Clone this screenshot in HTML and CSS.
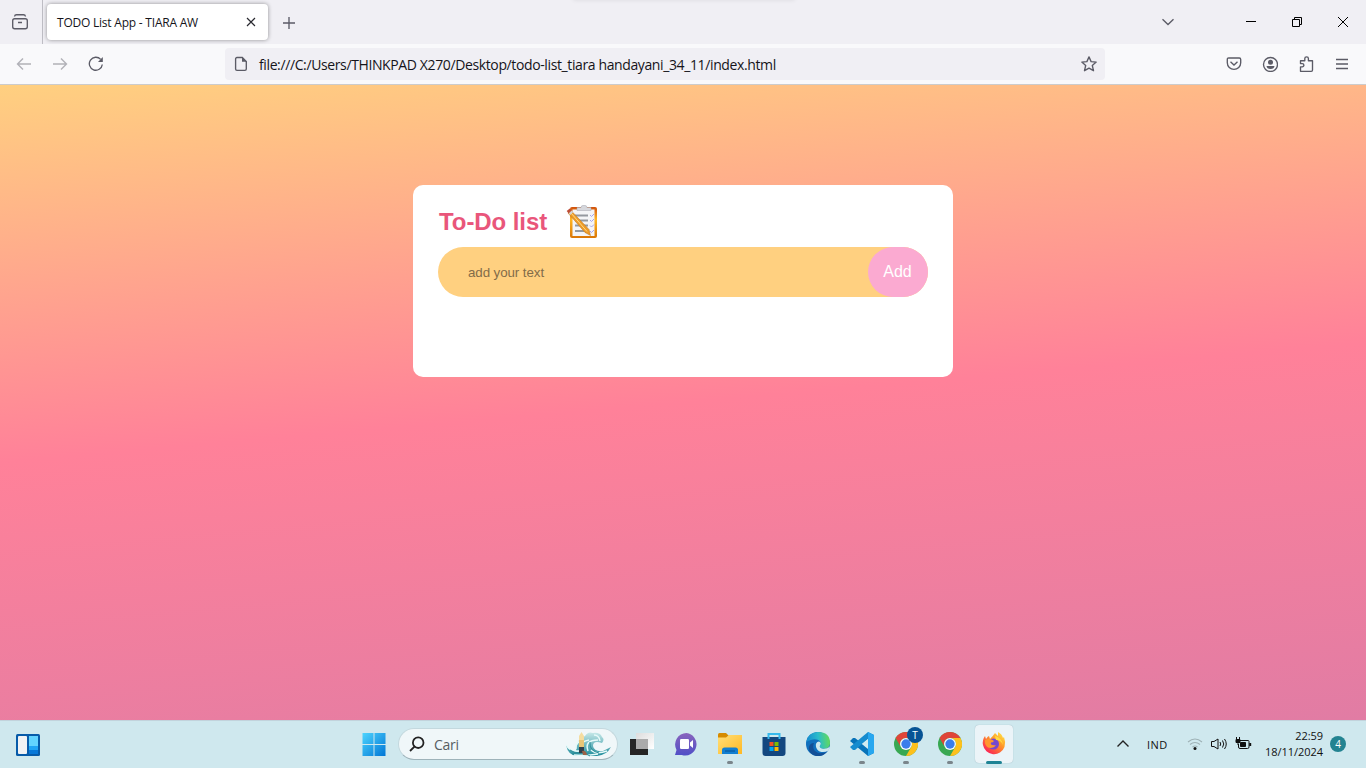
FILE: index.html
```html
<!DOCTYPE html>
<html lang="id">
<head>
<meta charset="utf-8">
<title>TODO List App - TIARA AW</title>
<link rel="stylesheet" href="styles.css">
</head>
<body>
<div class="screen">
  <header class="tabs">
    <div class="firefox-view">
      <svg class="line" width="16" height="16" viewBox="0 0 16 16"><rect x=".7" y="4.700" width="14.600" height="10" rx="2"/><path d="M2.500 2.500Q2.800.7 4.500.7h7Q13.200.7 13.500 2.500M6 8.500h4"/></svg>
    </div>
    <div class="tab"><span class="tab-title">TODO List App - TIARA AW</span>
      <svg class="dark" width="10" height="10" viewBox="0 0 10 10"><path d="M1 1l8 8M9 1L1 9"/></svg>
    </div>
    <svg class="line new-tab" width="14" height="14" viewBox="0 0 14 14"><path d="M7 1v12M1 7h12"/></svg>
    <div class="window-actions">
      <svg class="line" width="14" height="14" viewBox="0 0 14 14"><path d="M1.500 4.200L7 9.500l5.500-5.300"/></svg>
      <svg class="black" width="10" height="10" viewBox="0 0 10 10"><path d="M0 4.500h10"/></svg>
      <svg class="black" width="10" height="10" viewBox="0 0 10 10"><path d="M.5 2.500h7v7h-7zM2.500 2.500v-2h7v7h-2"/></svg>
      <svg class="black" width="10" height="10" viewBox="0 0 10 10"><path d="M0 0l10 10M10 0L0 10"/></svg>
    </div>
    <div class="top-handle"></div>
  </header>
  <nav class="toolbar">
    <div class="nav-buttons">
      <svg class="line muted" width="16" height="16" viewBox="0 0 16 16"><path d="M15 8H1.500M7 2.500L1.500 8 7 13.500"/></svg>
      <svg class="line muted" width="16" height="16" viewBox="0 0 16 16"><path d="M1 8h13.500M9 2.500L14.500 8 9 13.500"/></svg>
      <svg class="line" width="16" height="16" viewBox="0 0 16 16"><path d="M14.300 8.500A6.500 6.500 0 1 1 12.700 3.400"/><path class="solid" d="M14.800 1v5H10z"/></svg>
    </div>
    <div class="address">
      <svg class="line" width="16" height="16" viewBox="0 0 16 16"><path d="M4 1.500h5.300L13.300 5.500V13a1.400 1.400 0 0 1-1.400 1.400H4A1.400 1.400 0 0 1 2.600 13V3A1.400 1.400 0 0 1 4 1.500z"/><path class="solid" d="M9 1v4.700h4.500z"/></svg>
      <span class="url">file:///C:/Users/THINKPAD X270/Desktop/todo-list_tiara handayani_34_11/index.html</span>
      <svg class="line" width="16" height="16" viewBox="0 0 16 16"><path stroke-linejoin="round" d="M8 .9l2.100 4.700 5.100.5-3.900 3.400 1.200 5.200L8 12.100l-4.500 2.600 1.200-5.200L.8 6.100l5.100-.5z"/></svg>
    </div>
    <div class="tools">
      <svg class="line" width="16" height="16" viewBox="0 0 16 16"><path d="M2.700 2h10.600q1.400 0 1.400 1.400v3.300a6.700 6.700 0 0 1-13.400 0V3.400Q1.300 2 2.700 2zM4.500 5.800L8 9l3.500-3.200"/></svg>
      <svg class="line" width="16" height="16" viewBox="0 0 16 16"><circle cx="8.500" cy="8.500" r="7"/><circle class="solid" cx="8.500" cy="6.200" r="2.500"/><path class="solid" d="M4.500 10h8q-.3 3-4 3t-4-3z"/></svg>
      <svg class="line" width="16" height="16" viewBox="0 0 16 16"><path stroke-linejoin="round" d="M2.500 15.300v-4.500h1.800a1.500 1.500 0 0 0 0-3.200H2.500V4.700h4.300V2.600a1.800 1.800 0 0 1 3.600 0v2.100h4.100v9.300q0 1.300-1.200 1.300z"/></svg>
      <svg class="line" width="16" height="16" viewBox="0 0 16 16"><path d="M2 3.500h12M2 8h12M2 12.500h12"/></svg>
    </div>
  </nav>

  <main class="page">
    <section class="todo">
      <h1 class="heading">To-Do list
        <svg class="clipboard" width="32" height="34" viewBox="0 0 32 34">
          <defs><linearGradient id="board" x2="0" y2="1"><stop stop-color="#d0500c"/><stop offset=".4" stop-color="#ffb624"/><stop offset="1" stop-color="#d97505"/></linearGradient></defs>
          <rect x="4" y="2" width="27" height="31" rx="2" fill="url(#board)"/>
          <path d="M6.500 4.500h22V31h-22z" fill="#f4f5f7"/>
          <path d="M11 2.500h4q0-2.200 3-2.200t3 2.200h4v3H11z" fill="#d6d7dc" stroke="#a5a7af" stroke-width=".5"/>
          <path d="M9 10.500h13M9 15.500h13M9 20.500h13M9 26h13" stroke="#94999f" stroke-width="2"/>
          <path d="M24 10l1.500 1.500L28 9M24 15l1.500 1.500L28 14M24 20.500l1.500 1.500 2.500-2.500M24 26l1.500 1.500L28 25" fill="none" stroke="#a4a3ed"/>
          <path d="M2 8l3-2.500 18 19 1.500 6-5.500-3z" fill="#ed9b27" stroke="#b87423" stroke-width=".5"/><path d="M5 8l16 18.500" stroke="#ffda83"/><path d="M.7 6l3-2.500 2 2-3 3z" fill="#bd4d37"/><path d="M2.700 8.500l3-3 1.500 1.500-3 3z" fill="#d3d3d3"/>
        </svg>
      </h1>
      <div class="entry"><input class="entry-text" placeholder="add your text"><button class="add">Add</button></div>
    </section>
  </main>

  <footer class="taskbar">
    <svg class="widgets" width="24" height="22" viewBox="0 0 24 22"><rect width="24" height="22" rx="1.500" fill="#075ba9"/><rect x="2" y="2" width="9" height="18" rx="1" fill="#f1f2f4"/><path d="M13 2h9v10h-9z" fill="#62d3ff"/><path d="M13 12h9v4h-9z" fill="#20a4f5"/><path d="M13 16h9v4h-9z" fill="#0878d8"/></svg>
    <div class="apps">
      <div class="app start"><svg width="24" height="24" viewBox="0 0 24 24"><defs><linearGradient id="win" gradientUnits="userSpaceOnUse" x2="24" y2="24"><stop stop-color="#50d7ff"/><stop offset="1" stop-color="#0075d5"/></linearGradient></defs><path fill="url(#win)" d="M.5 1h11v11H.5zM12.500 1h11v11h-11zM.5 13h11v11H.5zM12.500 13h11v11h-11z"/></svg></div>
      <div class="search">
        <svg width="16" height="16" viewBox="0 0 16 16" fill="none" stroke="#222" stroke-width="1.800"><circle cx="9.200" cy="6.700" r="5.300"/><path d="M5.700 10.300L1 15"/></svg>
        <span class="search-text">Cari</span>
        <svg width="48" height="27" viewBox="0 0 48 27"><defs><linearGradient id="sea" x2="0" y2="1"><stop stop-color="#c7e9e9"/><stop offset="1" stop-color="#208c9b"/></linearGradient></defs>
          <path d="M1 14q3 6 10 6Q12 7 20 5q3-5 8-3 7-1 9 4 3 2 0 6-9-3-9 3 1 6 10 5l8-4q-4 8-14 9H13Q3 25 1 14z" fill="url(#sea)"/>
          <path d="M1.500 14q3 7 13 6M11 18q-1-5 4-8M29 4q5 0 6 6M17 19q-4-8 7-10M23 20q-4-11 10-11M26 19q5 5 16 1M9 24q13 1 24-1" fill="none" stroke="#e6faf9" stroke-width="1.500"/>
          <path d="M7 23q10-4 18 2M25 11q-1 9 9 11M5 19q5 4 11 3" stroke="#2e8e99" fill="none"/>
          <path d="M14 5l2.500-4L19 5v7h-5z" fill="#f4dda1"/><path d="M14 9h5v7h-5z" fill="#e9c576"/><path d="M14 16h5v6h-5z" fill="#31404c"/><path d="M17 20q4-1 5 4h-4z" fill="#9c6247"/></svg>
      </div>
      <div class="app"><svg width="24" height="24" viewBox="0 0 24 24"><defs><linearGradient id="pane" x2="1" y2="1"><stop stop-color="#ddd"/><stop offset="1" stop-color="#fff"/></linearGradient></defs><path d="M0 7h18v16H0z" fill="#252525"/><path d="M6 1h18v16H6z" fill="url(#pane)"/><path d="M6 7h12v10H6z" fill="#aaa"/></svg></div>
      <div class="app"><svg width="24" height="24" viewBox="0 0 24 24"><defs><linearGradient id="chat" x2="0" y2="1"><stop stop-color="#8964bd"/><stop offset="1" stop-color="#504fc7"/></linearGradient></defs><path d="M12.500 1a11.300 11.300 0 1 1-4.700 22H1l1.500-5A11.500 11.500 0 0 1 12.500 1z" fill="url(#chat)"/><rect x="6" y="7" width="9" height="10" rx="1.200" fill="#fff"/><path d="M16 10.500l3-2.500v8l-3-2.500z" fill="#fff"/></svg></div>
      <div class="app open"><svg width="24" height="24" viewBox="0 0 24 24"><defs><linearGradient id="folder" x2="1" y2="1"><stop stop-color="#ffdf79"/><stop offset="1" stop-color="#ffb823"/></linearGradient></defs><path d="M0 2.500Q0 1 1.500 1H8l3 3-3 4H0z" fill="#d68b00"/><path d="M0 5.500h8L11 3h13v19H0z" fill="url(#folder)"/><path d="M4 22v-4q0-2.500 2.500-2.500h11q2.500 0 2.500 2.500v4z" fill="#117fd1"/><path d="M7 19h10" stroke="#075394"/></svg></div>
      <div class="app"><svg width="24" height="24" viewBox="0 0 24 24"><path d="M.5 5h23v16q0 3-3 3h-17q-3 0-3-3z" fill="#13477f"/><path d="M6.500 7V2h11v5" fill="none" stroke="#35b9ed" stroke-width="2"/><path d="M7.500 10h4v4h-4z" fill="#f25022"/><path d="M12.500 10h4v4h-4z" fill="#7fba00"/><path d="M7.500 15h4v4h-4z" fill="#00a4ef"/><path d="M12.500 15h4v4h-4z" fill="#ffb900"/></svg></div>
      <div class="app"><svg width="24" height="24" viewBox="0 0 24 24"><defs><linearGradient id="edge" y1=".3" x2="1" y2=".2"><stop stop-color="#158acf"/><stop offset=".5" stop-color="#2abccb"/><stop offset="1" stop-color="#67dc52"/></linearGradient></defs><circle cx="12" cy="12" r="12" fill="#106fbd"/><path d="M.2 10Q2 0 12 0q12 0 12 11c0 5-5 7-9 5q-2-1-.5-3.500C16 9 10 4 .2 10z" fill="url(#edge)"/><path d="M10 15q-1-5 3-5.500 3 1.500 1 4-1 2 2 3 4 1.200 8-2l-1.500 4q-3 2-7 1.500-4-.5-5.500-5z" fill="#cce7ed"/><path d="M8 11c-3 7 3 11 8 10q3 0 5-1.500-4 5.500-11 4.500-8-2-7-9 1-4 5-4z" fill="#134f96"/></svg></div>
      <div class="app open"><svg width="24" height="24" viewBox="0 0 24 24"><path d="M18 0l6 3v18l-6 3L0 9l3-3h2l13 10.300z" fill="#0873b9"/><path d="M18 0v7L5 18H3l-3-3z" fill="#168ccf"/><path d="M18 0l6 3v18l-6 3z" fill="#28a7ef"/><path d="M18 7v10l-6.200-5z" fill="#d0eaf0"/></svg></div>
      <div class="app open"><svg width="24" height="24" viewBox="0 0 24 24"><g id="browser"><circle cx="12" cy="12" r="12" fill="#38a852"/><path d="M1.600 6A12 12 0 0 1 22.400 6H12a6 6 0 0 0-5.200 9z" fill="#df4539"/><path d="M22.400 6A12 12 0 0 1 12 24l5.200-9A6 6 0 0 0 12 6z" fill="#fdc01c"/><circle cx="12" cy="12" r="6" fill="#f7f9fd"/><circle cx="12" cy="12" r="4.700" fill="#397deb"/></g></svg><span class="profile">T</span></div>
      <div class="app open"><svg width="24" height="24" viewBox="0 0 24 24"><use href="#browser"/></svg></div>
      <div class="app open active"><svg width="24" height="24" viewBox="0 0 24 24"><defs><linearGradient id="fox" x1="1" x2=".2" y2="1"><stop stop-color="#fff44a"/><stop offset=".45" stop-color="#ff9829"/><stop offset="1" stop-color="#fb175a"/></linearGradient></defs><path d="M13 1l3 3V0q4 2 5 6l1-1q2 5 .5 10A11.200 11.200 0 0 1 1 13Q0 8 3 4l1 3q2-3 3-3l1 3q3-3 5-6z" fill="url(#fox)"/><circle cx="11.500" cy="12" r="5.500" fill="#7548cf"/><path d="M3 8q4-2 7.500 0l1.500 1q-1 1.500-3 1.500-1 1.500 1 2.500 2.500 0 4 .5-2 2-5 2.500-5 0-6-5z" fill="#ff972d"/><path d="M13 4q7 2 8 9-2-5-7-5z" fill="#ffdb43"/></svg></div>
    </div>
    <div class="tray">
      <svg class="chevron" width="14" height="14" viewBox="0 0 14 14"><path d="M1.500 9.500L7 4l5.500 5.500" fill="none" stroke="#222" stroke-width="1.400"/></svg>
      <span class="language">IND</span>
      <div class="status">
        <svg width="16" height="14" viewBox="0 0 16 14" fill="none" stroke="#9fb2b6" stroke-width="1.100"><path d="M1 5q7-6 14 0M3 7.500q5-4 10 0M5.500 10q2.500-2 5 0"/><circle cx="8" cy="11.500" r="1.500" fill="#111" stroke="none"/></svg>
        <svg width="18" height="14" viewBox="0 0 18 14" fill="none" stroke="#111"><path d="M1.500 4.500H4L8 2v10L4 9.500H1.500zM10 5q1.500 2 0 4M12.500 3.500q2.500 3.500 0 7M14.500 2q3.500 5 0 10"/></svg>
        <svg width="17" height="14" viewBox="0 0 17 14" fill="none" stroke="#111"><path d="M5 3.500h8q1 0 1 1v5.500q0 1.500-1.500 1.500H5q-1.500 0-1.500-1.500V7"/><path d="M5.500 5.500h5v4h-5z" fill="#111"/><path d="M1 2.500h4v3H1zM1.500 0v3M4.500 0v3M3 5v3" fill="#111"/><path d="M15.200 6v3" stroke-width="2"/></svg>
      </div>
      <div class="clock"><span class="time">22:59</span><span class="date">18/11/2024</span></div>
      <span class="notices">4</span>
    </div>
  </footer>
</div>
</body>
</html>
```

FILE: styles.css
```css
* { box-sizing: border-box; }
body { margin: 0; font-family: "Open Sans", "Noto Sans", sans-serif; overflow: hidden; }
svg { display: block; flex: none; }
.screen { width: 1366px; height: 768px; display: flex; flex-direction: column; }
.line, .dark, .black { fill: none; stroke: #5b5b66; stroke-width: 1.35; }
.dark { stroke: #28282f; stroke-width: 1.15; }
.black { stroke: #000; stroke-width: 1; }
.solid { fill: #5b5b66; stroke: none; }
.muted { opacity: .45; }

.tabs { height: 44px; background: #f0eff4; display: flex; align-items: center; position: relative; }
.firefox-view { width: 43px; height: 44px; padding: 14px 0 0 12px; border-right: 1px solid #bebdc4; }
.tab { width: 221px; height: 36px; margin-left: 4px; padding: 0 12px 0 10px; border-radius: 4px; background: #fff; box-shadow: 0 0 4px rgba(0,0,0,.4); display: flex; align-items: center; justify-content: space-between; }
.tab-title { font-size: 12px; letter-spacing: -.22px; color: #15141a; white-space: nowrap; }
.new-tab { margin-left: 14px; margin-top: 1px; }
.window-actions { margin-left: auto; padding-right: 18px; display: grid; grid-template-columns: 83px 46px 46px 10px; align-items: center; justify-items: start; }
.window-actions svg:first-child { margin-left: -2px; }
.top-handle { position: absolute; left: 573px; top: -3px; width: 222px; height: 3px; box-shadow: 0 0 4px rgba(0,0,0,.1); }

.toolbar { height: 41px; background: #f9f9fb; border-bottom: 1px solid #ccc; display: flex; align-items: center; }
.nav-buttons { width: 225px; padding-left: 16px; display: flex; gap: 20px; }
.address { width: 880px; height: 32px; padding: 0 8px; border-radius: 4px; background: #f0eff4; display: flex; align-items: center; }
.url { flex: 1; padding-left: 10px; color: #15141a; font-size: 14px; letter-spacing: -.38px; white-space: nowrap; }
.tools { margin-left: auto; padding-right: 16px; display: flex; gap: 20px; }

.page { height: 635px; padding-top: 100px; background: linear-gradient(175deg, #ffd080, #ff8199 50%, #e17ca4); }
.todo { width: 540px; height: 192px; margin: 0 auto; padding: 20px 25px; border-radius: 10px; background: #fff; }
.heading { height: 34px; margin: 0 0 8px; padding-left: 1px; display: flex; align-items: center; color: #e9567b; font: bold 24px "Liberation Sans", sans-serif; letter-spacing: -.08px; }
.clipboard { margin: -1px 0 0 19px; }
.entry { display: flex; height: 50px; border-radius: 30px; background: #ffd080; }
.entry-text { flex: 1; min-width: 0; padding: 0 0 0 30px; border: 0; outline: 0; background: transparent; font: 13.333px "Liberation Sans", sans-serif; letter-spacing: -.08px; }
.entry-text::placeholder { color: #826c49; }
.add { width: 60px; padding: 0 1px 0 0; border: 0; border-radius: 30px; background: #fbaad1; color: #fff; font: 16px "Liberation Sans", sans-serif; }

.taskbar { height: 48px; background: #cfe8ee; border-top: 1px solid #c2d3dc; display: flex; align-items: center; color: #202427; }
.widgets { margin-left: 16px; }
.apps { margin: -1px 0 0 311px; display: flex; align-items: center; height: 46px; }
.app { width: 44px; height: 46px; display: flex; align-items: center; justify-content: center; position: relative; }
.start { padding-left: 1px; }
.search { width: 220px; height: 32px; margin: 0 1px 0 3px; padding: 0 4px 0 10px; border-radius: 16px; background: #f0f7f9; border: 1px solid #c3d8de; border-bottom-color: #9eb3ba; display: flex; align-items: center; }
.search ~ .app { left: 1px; }
.search-text { flex: 1; padding-left: 9px; font-size: 14px; letter-spacing: -.25px; color: #575e62; }
.open::after { content: ""; position: absolute; bottom: 3px; width: 6px; height: 3px; border-radius: 2px; background: #7a858b; }
.active::before { content: ""; position: absolute; z-index: -1; inset: 4px 3px; border-radius: 4px; background: #ebf4f8; box-shadow: 0 0 1px #8faab4; }
.active { z-index: 0; }
.active::after { width: 16px; background: #1d8394; }
.profile { position: absolute; left: 23px; top: 6px; width: 16px; height: 16px; border-radius: 50%; background: #075394; color: #fff; font-size: 10px; line-height: 16px; text-align: center; }
.tray { margin: -1px 0 0 auto; padding-right: 20px; display: flex; align-items: center; }
.chevron { margin-right: 17px; }
.language { width: 40px; font-size: 11px; letter-spacing: .4px; color: #111; }
.status { display: flex; align-items: center; gap: 7px; width: 73px; }
.clock { width: 63px; margin-right: 7px; display: flex; flex-direction: column; align-items: flex-end; font-size: 11px; line-height: 16px; letter-spacing: -.05px; color: #111; }
.notices { width: 16px; height: 16px; border-radius: 50%; background: #238391; color: #fff; font-size: 10px; line-height: 16px; text-align: center; }
```
